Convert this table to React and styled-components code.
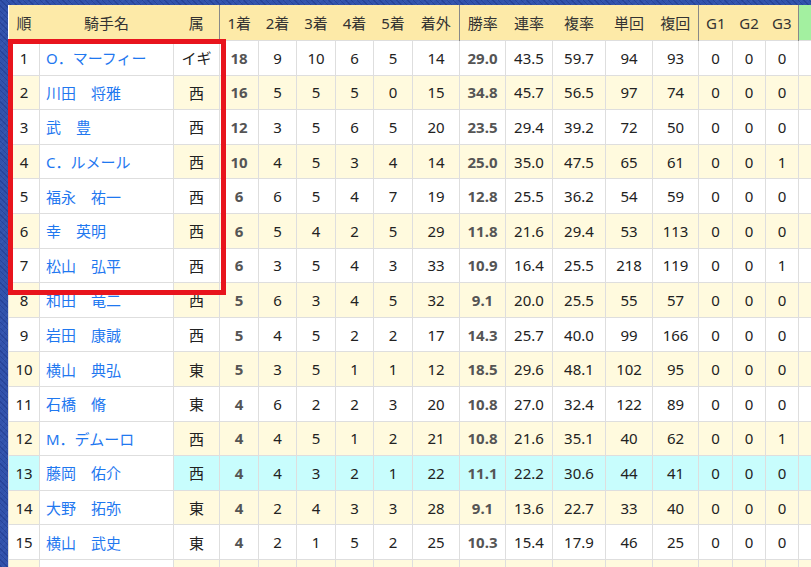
import React from 'react';
import styled, { createGlobalStyle } from 'styled-components';

const GlobalStyle = createGlobalStyle`
    html, body {
        margin: 0;
        padding: 0;
        overflow: hidden;
    }
    body {
        background-color: #3152ab;
        background-image:
            repeating-linear-gradient(45deg, rgba(20, 40, 120, 0.35) 0 1px, transparent 1px 4px),
            repeating-linear-gradient(-45deg, rgba(70, 100, 190, 0.3) 0 1px, transparent 1px 5px);
        font-family: "Noto Sans", "Noto Sans CJK JP", sans-serif;
    }
`;

const Page = styled.div`
    padding: 5px 0 0 8px;
    width: 1000px;
`;

const TableWrap = styled.div`
    position: relative;
    display: inline-block;
`;

const Table = styled.table`
    border-collapse: collapse;
    table-layout: fixed;
    background: #fff;
    font-size: 15px;
    color: #222;
`;

const HeadCell = styled.th`
    height: 35px;
    padding: 0;
    font-weight: normal;
    color: #333;
    text-align: center;
    background: ${p => (p.$green ? '#a3f0a0' : '#fdeaa8')};
    border-left: ${p => (p.$divider ? '1px solid #888' : 'none')};
    white-space: nowrap;
    overflow: hidden;
`;

const rowColors = {
    white: '#ffffff',
    cream: '#fffade',
    cyan: '#c8fdfd',
};

const Row = styled.tr`
    background: ${p => rowColors[p.$tone]};
`;

const Cell = styled.td`
    height: 33.6px;
    padding: 0;
    text-align: center;
    border: 1px solid #dedede;
    border-left: ${p => (p.$divider ? '1px solid #888' : '1px solid #dedede')};
    font-weight: ${p => (p.$bold ? 'bold' : 'normal')};
    color: ${p => (p.$bold ? '#555' : '#222')};
    white-space: nowrap;
    overflow: hidden;
`;

const NameCell = styled(Cell)`
    text-align: left;
    padding-left: 6px;
    background: #fff;
    color: #1f78f0;
`;

const Highlight = styled.div`
    position: absolute;
    left: 0;
    top: 34px;
    width: 218px;
    height: 256px;
    box-sizing: border-box;
    border: 5px solid #e8141d;
    pointer-events: none;
`;

const widths = [31, 134, 46, 39, 38, 39, 38, 39, 47, 46, 47, 53, 47, 46, 34, 33, 33, 40];

const headers = ['順', '騎手名', '属', '1着', '2着', '3着', '4着', '5着', '着外', '勝率', '連率', '複率', '単回', '複回', 'G1', 'G2', 'G3', '芝'];

// columns with the dark rule on their left side
const dividers = [3, 9, 14, 17];

const jockeys = [
    ['O．マーフィー', 'イギ', 18, 9, 10, 6, 5, 14, '29.0', '43.5', '59.7', 94, 93, 0, 0, 0, ''],
    ['川田　将雅', '西', 16, 5, 5, 5, 0, 15, '34.8', '45.7', '56.5', 97, 74, 0, 0, 0, '10'],
    ['武　豊', '西', 12, 3, 5, 6, 5, 20, '23.5', '29.4', '39.2', 72, 50, 0, 0, 0, ''],
    ['C．ルメール', '西', 10, 4, 5, 3, 4, 14, '25.0', '35.0', '47.5', 65, 61, 0, 0, 1, ''],
    ['福永　祐一', '西', 6, 6, 5, 4, 7, 19, '12.8', '25.5', '36.2', 54, 59, 0, 0, 0, ''],
    ['幸　英明', '西', 6, 5, 4, 2, 5, 29, '11.8', '21.6', '29.4', 53, 113, 0, 0, 0, ''],
    ['松山　弘平', '西', 6, 3, 5, 4, 3, 33, '10.9', '16.4', '25.5', 218, 119, 0, 0, 1, ''],
    ['和田　竜二', '西', 5, 6, 3, 4, 5, 32, '9.1', '20.0', '25.5', 55, 57, 0, 0, 0, ''],
    ['岩田　康誠', '西', 5, 4, 5, 2, 2, 17, '14.3', '25.7', '40.0', 99, 166, 0, 0, 0, ''],
    ['横山　典弘', '東', 5, 3, 5, 1, 1, 12, '18.5', '29.6', '48.1', 102, 95, 0, 0, 0, ''],
    ['石橋　脩', '東', 4, 6, 2, 2, 3, 20, '10.8', '27.0', '32.4', 122, 89, 0, 0, 0, ''],
    ['M．デムーロ', '西', 4, 4, 5, 1, 2, 21, '10.8', '21.6', '35.1', 40, 62, 0, 0, 1, ''],
    ['藤岡　佑介', '西', 4, 4, 3, 2, 1, 22, '11.1', '22.2', '30.6', 44, 41, 0, 0, 0, ''],
    ['大野　拓弥', '東', 4, 2, 4, 3, 3, 28, '9.1', '13.6', '22.7', 33, 40, 0, 0, 0, ''],
    ['横山　武史', '東', 4, 2, 1, 5, 2, 25, '10.3', '15.4', '17.9', 46, 25, 0, 0, 0, ''],
    ['', '', '', '', '', '', '', '', '', '', '', '', '', '', '', '', ''],
];

const toneFor = index => {
    if (index === 12) return 'cyan';
    return index % 2 === 0 ? 'white' : 'cream';
};

const App = () => (
    <Page>
        <GlobalStyle />
        <TableWrap>
            <Table style={{ width: widths.reduce((a, b) => a + b, 0) }}>
                <colgroup>
                    {widths.map((w, i) => <col key={i} style={{ width: w }} />)}
                </colgroup>
                <thead>
                    <tr>
                        {headers.map((h, i) => (
                            <HeadCell key={h} $divider={dividers.includes(i)} $green={i === 17}>
                                {h}
                            </HeadCell>
                        ))}
                    </tr>
                </thead>
                <tbody>
                    {jockeys.map((row, index) => {
                        const [name, area, ...stats] = row;
                        return (
                            <Row key={index} $tone={toneFor(index)}>
                                <Cell>{name ? index + 1 : ''}</Cell>
                                <NameCell>{name}</NameCell>
                                <Cell>{area}</Cell>
                                {stats.map((value, i) => {
                                    const col = i + 3;
                                    return (
                                        <Cell
                                            key={col}
                                            $divider={dividers.includes(col)}
                                            $bold={col === 3 || col === 9}
                                        >
                                            {value}
                                        </Cell>
                                    );
                                })}
                            </Row>
                        );
                    })}
                </tbody>
            </Table>
            <Highlight />
        </TableWrap>
    </Page>
);

export default App;
